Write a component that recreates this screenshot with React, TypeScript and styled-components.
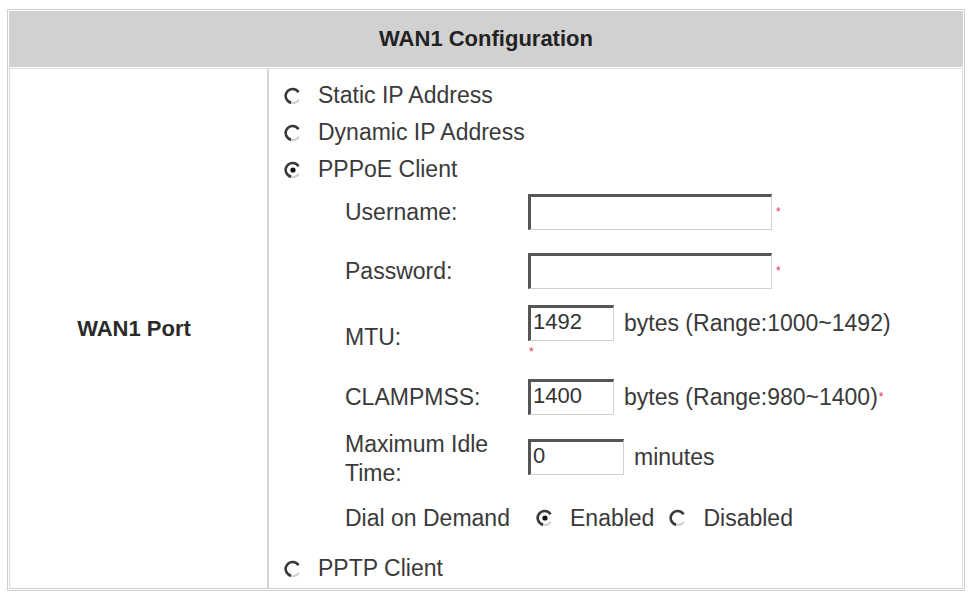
import React from "react";
import styled, { createGlobalStyle } from "styled-components";

const Global = createGlobalStyle`
  html, body { margin: 0; padding: 0; background: #fff; }
  body { font-family: "Liberation Sans", Arial, sans-serif; }
`;

const Table = styled.div`
  margin: 9px 0 0 7px;
  width: 958px;
  height: 582px;
  box-sizing: border-box;
  border: 1px solid #cfcfcf;
  padding: 1px;
  display: flex;
  flex-direction: column;
  font-family: "Liberation Sans", Arial, sans-serif;
  color: #3a3a3a;
`;

const Header = styled.div`
  height: 56px;
  flex: none;
  background: #d1d1d1;
  display: flex;
  align-items: center;
  justify-content: center;
  font-weight: bold;
  font-size: 22px;
  color: #222;
`;

const Body = styled.div`
  flex: 1;
  display: grid;
  grid-template-columns: 259px 1fr;
  margin-top: 1px;
  border: 1px solid #dcdcdc;
  border-bottom-color: #cfcfcf;
`;

const LeftCell = styled.div`
  border-right: 2px solid #d4d4d4;
  display: flex;
  align-items: center;
  justify-content: center;
  font-weight: bold;
  font-size: 22px;
  color: #2a2a2a;
  padding-right: 9px;
`;

const RightCell = styled.div`
  padding: 8px 0 0 15px;
  display: flex;
  flex-direction: column;
  font-size: 23px;
`;

const RadioRow = styled.div`
  height: 37px;
  display: flex;
  align-items: center;
  gap: 16px;
`;

const SubForm = styled.div`
  display: flex;
  flex-direction: column;
  padding-left: 61px;
`;

const FieldRow = styled.div<{ $h: number; $mt: number }>`
  display: grid;
  grid-template-columns: 183px auto;
  align-items: center;
  height: ${(p) => p.$h}px;
  margin-top: ${(p) => p.$mt}px;
`;

const Label = styled.div<{ $pt?: number }>`
  line-height: 29px;
  padding-top: ${(p) => p.$pt ?? 0}px;
`;

const Value = styled.div`
  display: flex;
  align-items: center;
`;

const TopValue = styled(Value)`
  align-self: start;
  padding-top: 9px;
`;

const ValueStack = styled.div`
  display: flex;
  flex-direction: column;
  align-items: flex-start;
`;

const Input = styled.div<{ $w: number }>`
  width: ${(p) => p.$w}px;
  height: 36px;
  box-sizing: border-box;
  border-top: 3px solid #555;
  border-left: 3px solid #555;
  border-right: 1px solid #d0d0d0;
  border-bottom: 1px solid #d0d0d0;
  background: #fff;
  font-size: 22px;
  padding: 1px 0 0 2px;
  color: #333;
`;

const Req = styled.span`
  color: #e0305a;
  font-size: 12px;
  margin-left: 4px;
  line-height: 1;
`;

const ReqBelow = styled.span`
  color: #e0305a;
  font-size: 12px;
  height: 20px;
  line-height: 14px;
  padding: 4px 0 0 1px;
  box-sizing: border-box;
`;

const Unit = styled.span`
  margin-left: 10px;
`;

const DialGroup = styled.div`
  display: flex;
  align-items: center;
  margin-left: 8px;
`;

const DialOption = styled.div`
  display: flex;
  align-items: center;
  gap: 16px;
  margin-right: 15px;
`;

const Radio = ({ checked }: { checked?: boolean }) => (
  <svg width="18" height="18" viewBox="0 0 18 18" style={{ flex: "none" }}>
    <path
      d="M14.6 5.2 A7 7 0 1 0 7.2 15.8"
      fill="none"
      stroke="#3a3a3a"
      strokeWidth="2.6"
    />
    <path
      d="M7.2 15.8 A7 7 0 0 0 14.9 12.8"
      fill="none"
      stroke="#cfcfcf"
      strokeWidth="2"
    />
    {checked && <circle cx="9" cy="9" r="2.6" fill="#111" />}
  </svg>
);

export default function App() {
  return (
    <>
      <Global />
      <Table>
        <Header>WAN1 Configuration</Header>
        <Body>
          <LeftCell>WAN1 Port</LeftCell>
          <RightCell>
            <RadioRow>
              <Radio />
              <span>Static IP Address</span>
            </RadioRow>
            <RadioRow>
              <Radio />
              <span>Dynamic IP Address</span>
            </RadioRow>
            <RadioRow>
              <Radio checked />
              <span>PPPoE Client</span>
            </RadioRow>
            <SubForm>
              <FieldRow $h={36} $mt={6}>
                <Label>Username:</Label>
                <Value>
                  <Input $w={244} />
                  <Req>*</Req>
                </Value>
              </FieldRow>
              <FieldRow $h={36} $mt={23}>
                <Label>Password:</Label>
                <Value>
                  <Input $w={244} />
                  <Req>*</Req>
                </Value>
              </FieldRow>
              <FieldRow $h={56} $mt={16}>
                <Label $pt={8}>MTU:</Label>
                <ValueStack>
                  <Value>
                    <Input $w={86}>1492</Input>
                    <Unit>bytes (Range:1000~1492)</Unit>
                  </Value>
                  <ReqBelow>*</ReqBelow>
                </ValueStack>
              </FieldRow>
              <FieldRow $h={36} $mt={18}>
                <Label>CLAMPMSS:</Label>
                <Value>
                  <Input $w={86}>1400</Input>
                  <Unit>bytes (Range:980~1400)</Unit>
                  <Req style={{ marginLeft: 1 }}>*</Req>
                </Value>
              </FieldRow>
              <FieldRow $h={58} $mt={15}>
                <Label>
                  Maximum Idle
                  <br />
                  Time:
                </Label>
                <TopValue>
                  <Input $w={96}>0</Input>
                  <Unit>minutes</Unit>
                </TopValue>
              </FieldRow>
              <FieldRow $h={36} $mt={12}>
                <Label>Dial on Demand</Label>
                <DialGroup>
                  <DialOption>
                    <Radio checked />
                    <span>Enabled</span>
                  </DialOption>
                  <DialOption>
                    <Radio />
                    <span>Disabled</span>
                  </DialOption>
                </DialGroup>
              </FieldRow>
            </SubForm>
            <RadioRow style={{ marginTop: 14 }}>
              <Radio />
              <span>PPTP Client</span>
            </RadioRow>
          </RightCell>
        </Body>
      </Table>
    </>
  );
}
